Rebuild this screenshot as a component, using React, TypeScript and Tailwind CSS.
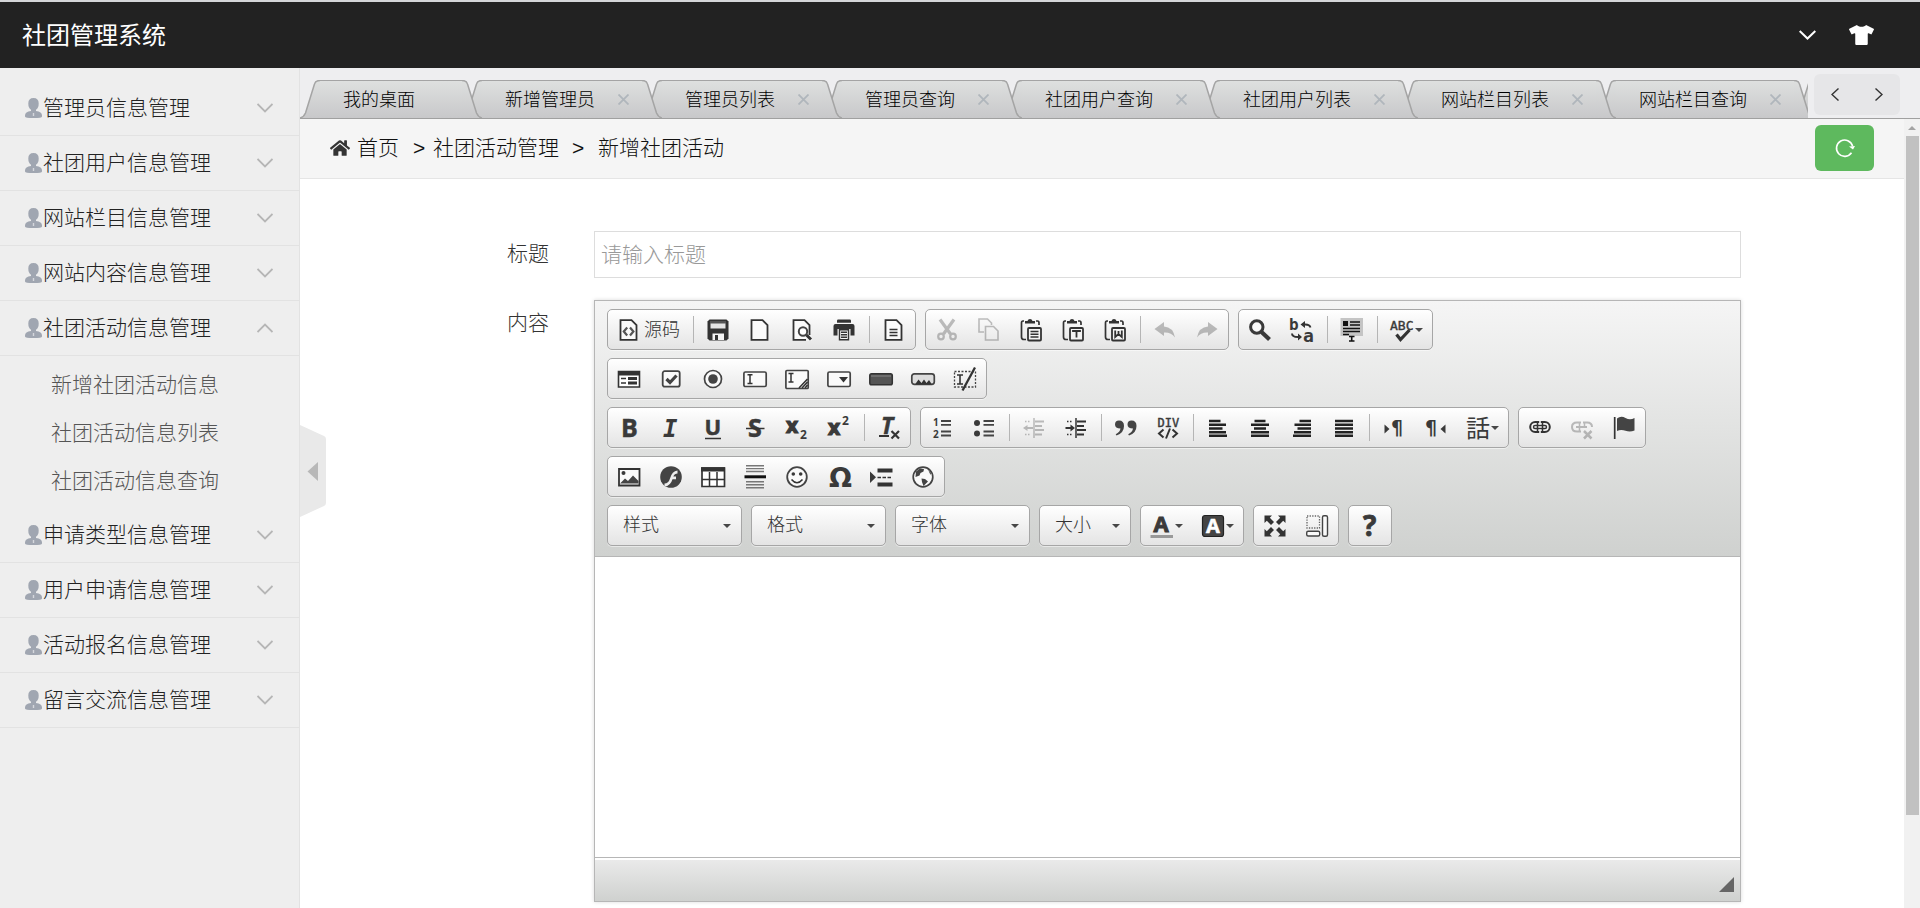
import { ReactNode, useState } from 'react';
import { FaHome, FaTshirt } from 'react-icons/fa';

const menus = [
  { name: '管理员信息管理', children: ['新增管理员', '管理员列表', '管理员查询'] },
  { name: '社团用户信息管理', children: ['社团用户列表', '社团用户查询'] },
  { name: '网站栏目信息管理', children: ['网站栏目列表', '网站栏目查询'] },
  { name: '网站内容信息管理', children: ['网站内容列表', '网站内容查询'] },
  { name: '社团活动信息管理', children: ['新增社团活动信息', '社团活动信息列表', '社团活动信息查询'] },
  { name: '申请类型信息管理', children: ['申请类型列表', '申请类型查询'] },
  { name: '用户申请信息管理', children: ['用户申请列表', '用户申请查询'] },
  { name: '活动报名信息管理', children: ['活动报名列表', '活动报名查询'] },
  { name: '留言交流信息管理', children: ['留言交流列表', '留言交流查询'] },
];

const tabs = [
  '我的桌面',
  '新增管理员',
  '管理员列表',
  '管理员查询',
  '社团用户查询',
  '社团用户列表',
  '网站栏目列表',
  '网站栏目查询',
  '网站内容列表',
];

const doc = <path d="M3.5 2.2h11l5 5v14.6h-16z" fill="#fafafa" stroke="#333" strokeWidth="1.8" />;

const clipboard = (
  <>
    <path d="M5 3H4Q2.500 3 2.500 5v14q0 2.500 2.500 2.500h2M17 3h1.500q1.500 0 1.500 2v2" fill="none" stroke="#333" strokeWidth="1.700" />
    <path d="M6 3h2.500q.5-2 2.500-2t2.500 2H16v2.500H6z" fill="#333" />
    <rect x="9" y="10" width="13" height="12.500" rx="1" fill="#f4f4f4" stroke="#333" strokeWidth="1.800" />
  </>
);

// 24x24 toolbar glyphs
const icons: Record<string, ReactNode> = {
  source: (
    <>
      {doc}
      <path d="M10.200 9.500 6.800 13.500l3.400 4M13 9.500l3.400 4-3.400 4" fill="none" stroke="#555" strokeWidth="2.200" />
    </>
  ),
  save: (
    <>
      <path d="M3.500 1.500h17l2 2v17l-2 2h-17l-2-2v-17z" fill="#333" />
      <path d="M4.500 3h15v7.500h-15z" fill="#e4e4e4" />
      <path d="M4 3h16v2.500H4z" fill="#555" />
      <path d="M6.500 15.500h11.500v6.500H6.500z" fill="#f4f4f4" />
      <path d="M9 17h3v5H9z" fill="#333" />
    </>
  ),
  newpage: doc,
  preview: (
    <>
      {doc}
      <path d="M16 17h6v6h-6z" fill="#f2f2f2" />
      <circle cx="13" cy="13.500" r="4.200" fill="#fff" stroke="#444" strokeWidth="2" />
      <path d="m16.500 17 4.500 4.500" stroke="#333" strokeWidth="3" />
    </>
  ),
  print: (
    <>
      <path d="M5 2.500q0-1 1.200-1h11.600q1.200 0 1.200 1v2.300H5z" fill="#333" />
      <path d="M1.500 8q0-2 2-2h17q2 0 2 2v9.500H18.500V11h-13v6.500h-4z" fill="#333" />
      <path d="M7.500 11.800h9v10h-9z" fill="#f4f4f4" stroke="#333" strokeWidth="1.400" />
      <path d="M9 14.300h6M9 16.800h6M9 19.300h6" stroke="#333" strokeWidth="1.400" />
    </>
  ),
  templates: (
    <>
      {doc}
      <path d="M7.500 11.500h8M7.500 14.500h8M7.500 17.500h8" stroke="#333" strokeWidth="1.600" />
    </>
  ),
  cut: (
    <>
      <path d="M5 1.500 15.500 16M19 1.500 8.500 16" stroke="#333" strokeWidth="3.200" />
      <circle cx="6" cy="18.500" r="2.800" fill="none" stroke="#333" strokeWidth="2.200" />
      <circle cx="18" cy="18.500" r="2.800" fill="none" stroke="#333" strokeWidth="2.200" />
    </>
  ),
  copy: (
    <>
      <path d="M7 14H2V1h8.500l4 4v2" fill="none" stroke="#333" strokeWidth="1.600" />
      <path d="M8.500 8.500h8l4.500 4.500v9H8.500z" fill="none" stroke="#333" strokeWidth="1.600" />
    </>
  ),
  paste: (
    <>
      {clipboard}
      <path d="M11.500 13.500h8M11.500 16.300h8M11.500 19h8" stroke="#333" strokeWidth="1.500" />
    </>
  ),
  pastetext: (
    <>
      {clipboard}
      <path d="M12 14v-1h7v1M15.500 13v6.500" fill="none" stroke="#333" strokeWidth="1.800" />
    </>
  ),
  pasteword: (
    <>
      {clipboard}
      <path d="M12.200 12.500v6.500l3.300-3 3.300 3v-6.500M15.500 13v4" fill="none" stroke="#333" strokeWidth="1.800" />
    </>
  ),
  undo: <path d="M1.500 11 11 4v4.500q9 .5 11 11-4-5.500-11-5V18z" fill="#333" />,
  redo: <path d="M22.500 11 13 4v4.500q-9 .5-11 11 4-5.500 11-5V18z" fill="#333" />,
  find: (
    <>
      <circle cx="8.800" cy="9" r="6.200" fill="#fafafa" stroke="#3a3a3a" strokeWidth="3" />
      <path d="m13.500 14 8 7.500" stroke="#3a3a3a" strokeWidth="4.200" />
    </>
  ),
  replace: (
    <>
      <text x="-1" y="12" fontSize="16" fontWeight="700" fontFamily="DejaVu Sans Mono">b</text>
      <text x="13" y="23.500" fontSize="18" fontWeight="700" fontFamily="DejaVu Sans Mono">a</text>
      <path d="M14 6.500q5.500-.5 6.500 3M2 15.500q0 3.500 6 3.500" fill="none" stroke="#333" strokeWidth="1.900" />
      <path d="m10.500 6.500 4.500-3.500v7zM12 19l-4-3.500v7z" fill="#333" />
    </>
  ),
  selectall: (
    <>
      <path d="M.5 0h22.500v18H.5z" fill="#c4c4c4" />
      <path d="M3 3h5v5H3z" fill="#111" />
      <path d="M10 4h10M10 7h10M3 10.500h17M3 13.500h17M3 16.500h6" stroke="#111" strokeWidth="1.500" />
      <path d="M9 18.500h5.500M9 23h5.500M11.700 18.500V23" stroke="#111" strokeWidth="1.600" />
    </>
  ),
  spell: (
    <>
      <text x="0" y="12" fontSize="13" fontFamily="DejaVu Sans Mono" stroke="#3a3a3a" strokeWidth=".4">ABC</text>
      <path d="m6.500 16.500 4 5 9-9.500" fill="none" stroke="#333" strokeWidth="3.200" />
    </>
  ),
  form: (
    <>
      <path d="M1.500 4.500h21v15.500h-21z" fill="#fff" stroke="#333" strokeWidth="1.600" />
      <path d="M1 4h22v4.500H1z" fill="#333" />
      <path d="M4 11.500h5M4 16h5" stroke="#333" strokeWidth="1.400" />
      <path d="M11 11.500h9M11 16h9" stroke="#333" strokeWidth="3" />
    </>
  ),
  checkbox: (
    <>
      <rect x="3.700" y="4.200" width="17" height="15.500" rx="2" fill="#fafafa" stroke="#444" strokeWidth="1.800" />
      <path d="m7.500 12 3.500 3.500 6.500-7" fill="none" stroke="#444" strokeWidth="3.200" />
    </>
  ),
  radio: (
    <>
      <circle cx="12" cy="12" r="8.500" fill="#fafafa" stroke="#444" strokeWidth="1.700" />
      <circle cx="12" cy="12" r="4.800" fill="#444" />
    </>
  ),
  textfield: (
    <>
      <rect x=".9" y="5" width="22.300" height="14.500" rx="1.500" fill="#fafafa" stroke="#444" strokeWidth="1.700" />
      <path d="M4.500 7.800h5M4.500 16.500h5M7 8v8" stroke="#333" strokeWidth="1.500" />
    </>
  ),
  textarea: (
    <>
      <rect x=".9" y="3.500" width="22.300" height="18" rx="1" fill="#fafafa" stroke="#444" strokeWidth="1.700" />
      <path d="M3.500 6.500h5M3.500 15h5M6 6.500v8.500" stroke="#333" strokeWidth="1.500" />
      <path d="m14 21 8.500-9M17 21l5.500-6M20 21l2.500-3" stroke="#333" strokeWidth="1.600" />
    </>
  ),
  select: (
    <>
      <rect x=".9" y="5" width="22.300" height="14.500" rx="1.500" fill="#fafafa" stroke="#444" strokeWidth="1.700" />
      <path d="M12 10h9l-4.500 5.500z" fill="#333" />
    </>
  ),
  button: (
    <>
      <rect x=".8" y="6.800" width="22.500" height="11" rx="1.800" fill="#555" stroke="#333" strokeWidth="1.500" />
      <path d="M2 9h20" stroke="#777" strokeWidth="1.500" />
    </>
  ),
  imagebutton: (
    <>
      <rect x=".8" y="6.800" width="22.500" height="10.500" rx="2.500" fill="#ddd" stroke="#444" strokeWidth="1.700" />
      <path d="m4 17.500 3.500-5 3 3.500 2.500-3.500 2.500 3.500 2.500-3 3 4.500z" fill="#333" />
    </>
  ),
  hidden: (
    <>
      <rect x="1.500" y="4.500" width="21" height="15.500" fill="none" stroke="#444" strokeWidth="1.300" strokeDasharray="2 1.500" />
      <path d="M4 8h6M4 17h6M7 8v9" stroke="#333" strokeWidth="1.600" />
      <path d="M9.500 23.500 22 .5" stroke="#333" strokeWidth="2.300" />
    </>
  ),
  bold: <text x="4" y="21" fontSize="25" fontWeight="700" stroke="#3a3a3a" strokeWidth=".5">B</text>,
  italic: (
    <text x="4" y="21" fontSize="24" fontWeight="700" fontStyle="italic" fontFamily="DejaVu Sans Mono">I</text>
  ),
  underline: (
    <>
      <text x="3.500" y="18.500" fontSize="22" fontWeight="700" stroke="#3a3a3a" strokeWidth=".5">U</text>
      <path d="M4 22.500h16" stroke="#333" strokeWidth="1.500" />
    </>
  ),
  strike: (
    <>
      <text x="5" y="21" fontSize="25" fontWeight="700" stroke="#3a3a3a" strokeWidth=".5">S</text>
      <path d="M3 12.500h18.500" stroke="#333" strokeWidth="1.500" />
    </>
  ),
  sub: (
    <>
      <text x="1" y="16.500" fontSize="21" fontWeight="700" stroke="#3a3a3a" strokeWidth="1.200">x</text>
      <text x="15" y="22.500" fontSize="12" fontWeight="700">2</text>
    </>
  ),
  sup: (
    <>
      <text x="1" y="18.500" fontSize="21" fontWeight="700" stroke="#3a3a3a" strokeWidth="1.200">x</text>
      <text x="15" y="9" fontSize="12" fontWeight="700">2</text>
    </>
  ),
  clear: (
    <>
      <text x="4" y="17.500" fontSize="23" fontWeight="700" fontStyle="italic" stroke="#3a3a3a" strokeWidth=".5">T</text>
      <path d="M2 20h10M14.500 15l7.500 7.500M22 15l-7.500 7.500" stroke="#333" strokeWidth="2.200" />
    </>
  ),
  ol: (
    <>
      <text x="3" y="10" fontSize="10" fontWeight="700">1</text>
      <text x="3" y="22" fontSize="10" fontWeight="700">2</text>
      <path d="M11 5h10M11 8.800h10M11 15.500h10M11 19.500h10" stroke="#444" strokeWidth="1.800" />
    </>
  ),
  ul: (
    <>
      <circle cx="5" cy="7" r="3" />
      <circle cx="5" cy="17.500" r="3" />
      <path d="M11.500 5h10.500M11.500 8.800h10.500M11.500 15.500h10.500M11.500 19.500h10.500" stroke="#444" strokeWidth="1.800" />
    </>
  ),
  outdent: (
    <>
      <path d="M12 2v20" stroke="#333" strokeWidth="1.500" />
      <path d="M3 5.500h6M3 18.500h6" stroke="#333" strokeWidth="1.500" strokeDasharray="1.500 1.500" />
      <path d="M13 5.500h9M13 10h7M13 14h9M13 18.500h7M4 12h7" stroke="#333" strokeWidth="1.800" />
      <path d="M1 12l4.500-3v6z" fill="#333" />
    </>
  ),
  indent: (
    <>
      <path d="M12 2v20" stroke="#333" strokeWidth="1.500" />
      <path d="M3 5.500h6M3 18.500h6" stroke="#333" strokeWidth="1.500" strokeDasharray="1.500 1.500" />
      <path d="M13 5.500h9M13 10h7M13 14h9M13 18.500h7M1.500 12h6" stroke="#333" strokeWidth="1.800" />
      <path d="M11 12 6.500 8.500v7z" fill="#333" />
    </>
  ),
  quote: (
    <path
      d="M1 8.500Q1 4.500 5 4.500q5 0 5 5.500 0 7-7.500 9.500l-.8-1.300Q6 16 6.500 12.500 1 12.500 1 8.500zM13.500 8.500q0-4 4-4 5 0 5 5.500 0 7-7.500 9.500l-.8-1.300q4.300-2.200 4.800-5.700-5.500 0-5.500-4z"
      fill="#444"
    />
  ),
  div: (
    <>
      <text x="1.500" y="11" fontSize="12" fontFamily="DejaVu Sans Mono" stroke="#3a3a3a" strokeWidth=".4">DIV</text>
      <path d="m7.500 13.500-4.500 4 4.500 4M16.500 13.500l4.500 4-4.500 4M14 12.500l-4 10" fill="none" stroke="#333" strokeWidth="2" />
    </>
  ),
  left: <path d="M3 5h11.500M3 8.800h17M3 12.500h13.500M3 16.200h17M3 19.700h18" stroke="#222" strokeWidth="2.500" />,
  center: <path d="M6.500 5h11M3 8.800h18M6 12.500h12M3 16.200h18M3 19.700h18" stroke="#222" strokeWidth="2.500" />,
  right: <path d="M9.500 5H21M4.500 8.800H21M7.500 12.500H21M4 16.200h17M3 19.700h18" stroke="#222" strokeWidth="2.500" />,
  justify: <path d="M3 5h18M3 8.800h18M3 12.500h18M3 16.200h18M3 19.700h18" stroke="#222" strokeWidth="2.500" />,
  ltr: (
    <>
      <path d="M2.500 8.500v9l5-4.500z" />
      <text x="9" y="18" fontSize="19" fontWeight="700" fontFamily="DejaVu Sans">¶</text>
    </>
  ),
  rtl: (
    <>
      <path d="M21.500 8.500v9l-5-4.500z" />
      <text x="1" y="18" fontSize="19" fontWeight="700" fontFamily="DejaVu Sans">¶</text>
    </>
  ),
  lang: <text x="0" y="20.500" fontSize="24" fontWeight="400" fontFamily="Noto Sans CJK JP">話</text>,
  link: (
    <>
      <rect x="2.200" y="6" width="19.600" height="10" rx="5" fill="none" stroke="#333" strokeWidth="2" />
      <rect x="5.500" y="9.500" width="13" height="3" rx="1.500" fill="#fff" stroke="#333" strokeWidth="1.400" />
      <path d="M12 5v3.500M12 13.500V17" stroke="#f0f0f0" strokeWidth="1.600" />
      <path d="M9.500 6.500v9M14.500 6.500v9" stroke="#333" strokeWidth="1.500" />
    </>
  ),
  unlink: (
    <>
      <path d="M11 15.500H7q-5 0-5-4.500t5-4.500h4M13 6.500h4q5 0 5 4.500" fill="none" stroke="#333" strokeWidth="2" />
      <path d="M9.500 6.500v9M14.500 6.500v5" stroke="#333" strokeWidth="1.500" />
      <path d="M6 11h11" stroke="#333" strokeWidth="2" />
      <path d="m14 15 7.500 7.500M21.500 15 14 22.500" stroke="#333" strokeWidth="2.500" />
    </>
  ),
  anchor: (
    <>
      <path d="M2.700 1v22" stroke="#333" strokeWidth="1.700" />
      <path d="M5 2.500q4-3 8.500-.5t9 0v12.500q-4.500 2-9 .3T5 15z" fill="#444" />
    </>
  ),
  image: (
    <>
      <path d="M2 4h20.500v16.500H2z" fill="#fafafa" stroke="#333" strokeWidth="1.800" />
      <circle cx="6.500" cy="8" r="2" />
      <path d="m3 18.500 5-5 3 2.500 5-5.500 5.500 5.500v2.500z" fill="#444" />
    </>
  ),
  flash: (
    <>
      <circle cx="12" cy="12" r="10.800" fill="#444" />
      <path d="M5.500 18.500q4 0 5.500-5 2-7.500 7.500-8v3q-3 0-4.200 3H17v2.700h-3.500Q11.500 21 5.500 21.500z" fill="#eee" />
    </>
  ),
  table: (
    <>
      <path d="M1 3h22.500v18.500H1z" fill="#fff" stroke="#333" strokeWidth="1.700" />
      <path d="M0 2.200h24v4.300H0z" fill="#333" />
      <path d="M8.500 7v14M16 7v14M1 14.500h22" stroke="#333" strokeWidth="1.500" />
    </>
  ),
  hr: (
    <>
      <path d="M3 .8h18M3 3.600h18M3 6.500h18M3 16.800h18M3 19.700h18M3 22.800h18" stroke="#777" strokeWidth="1.400" />
      <path d="M1.500 11.800h21.500" stroke="#111" strokeWidth="3" />
    </>
  ),
  smiley: (
    <>
      <circle cx="12" cy="12" r="9.800" fill="#fafafa" stroke="#444" strokeWidth="1.800" />
      <circle cx="8.300" cy="9" r="1.800" />
      <circle cx="15.700" cy="9" r="1.800" />
      <path d="M6.500 14.500q5.500 6.500 11 0" fill="none" stroke="#333" strokeWidth="1.600" />
    </>
  ),
  omega: <text x="2" y="22" fontSize="27" fontWeight="700" fontFamily="DejaVu Sans">Ω</text>,
  pagebreak: (
    <>
      <path d="M1 6.500v11.500l6-5.700z" />
      <path d="M8.500 5.500H23.500M8.500 19.500H23.500" stroke="#333" strokeWidth="4.200" />
      <path d="M8.500 12.500h15" stroke="#333" strokeWidth="1.500" strokeDasharray="3.500 1.500" />
    </>
  ),
  iframe: (
    <>
      <circle cx="12" cy="12" r="9.800" fill="#fafafa" stroke="#444" strokeWidth="1.700" />
      <path d="M5 6.500 9 3.500l4 .5-.5 2.500-3 1.500-1 2.500-4 1.500zM10.500 13.500l3.500.5 3 2.500-3 3-1.500 1.500-1.500-4zM17 4.500l3 3.500-.5 2z" fill="#444" />
    </>
  ),
  color: (
    <>
      <text x="3.500" y="18" fontSize="22" fontWeight="700" stroke="#3a3a3a" strokeWidth="1">A</text>
      <path d="M.5 22.500H23" stroke="#999" strokeWidth="3" />
    </>
  ),
  bgcolor: (
    <>
      <rect x="1.500" y="1.500" width="21" height="21" rx="2.500" fill="#444" stroke="#222" strokeWidth="1.200" />
      <text x="5" y="19" fontSize="20" fontWeight="700" stroke="#fff" strokeWidth=".6" style={{ fill: '#fff' }}>A</text>
    </>
  ),
  maximize: (
    <path
      d="M1.500 1.500H9L6.800 3.700 11 8l-3 3-4.200-4.200L1.500 9zM22.500 1.500V9l-2.300-2.200L16 11l-3-3 4.200-4.300L15 1.500zM1.500 22.500V15l2.300 2.200L8 13l3 3-4.200 4.300L9 22.500zM22.500 22.500H15l2.200-2.200L13 16l3-3 4.200 4.200 2.300-2.200z"
      fill="#333"
    />
  ),
  blocks: (
    <>
      <path d="M2 2h12.500v12H2z" fill="none" stroke="#666" strokeWidth="1.300" strokeDasharray="1.300 1.300" />
      <rect x="1.700" y="17.200" width="13" height="4.800" rx="1.500" fill="#fafafa" stroke="#444" strokeWidth="1.400" />
      <rect x="17.500" y="1.800" width="5" height="20.500" rx="1.500" fill="#fafafa" stroke="#444" strokeWidth="1.400" />
    </>
  ),
  about: <text x="5" y="22" fontSize="28" fontWeight="700" stroke="#3a3a3a" strokeWidth=".8">?</text>,
};

// "|" draws a separator inside a group
const toolbarRows = [
  [
    ['source', '|', 'save', 'newpage', 'preview', 'print', '|', 'templates'],
    ['cut', 'copy', 'paste', 'pastetext', 'pasteword', '|', 'undo', 'redo'],
    ['find', 'replace', '|', 'selectall', '|', 'spell'],
  ],
  [['form', 'checkbox', 'radio', 'textfield', 'textarea', 'select', 'button', 'imagebutton', 'hidden']],
  [
    ['bold', 'italic', 'underline', 'strike', 'sub', 'sup', '|', 'clear'],
    ['ol', 'ul', '|', 'outdent', 'indent', '|', 'quote', 'div', '|', 'left', 'center', 'right', 'justify', '|', 'ltr', 'rtl', 'lang'],
    ['link', 'unlink', 'anchor'],
  ],
  [['image', 'flash', 'table', 'hr', 'smiley', 'omega', 'pagebreak', 'iframe']],
];

const disabled = ['cut', 'copy', 'undo', 'redo', 'outdent', 'unlink'];
const withArrow = ['spell', 'lang', 'color', 'bgcolor'];

function Arrow() {
  return (
    <svg className="w-2 h-1" viewBox="0 0 8 4">
      <path d="M0 0h8L4 4z" fill="#474747" />
    </svg>
  );
}

function ToolButton({ name }: { name: string }) {
  return (
    <button
      type="button"
      aria-label={name === 'source' ? undefined : name}
      disabled={disabled.includes(name)}
      className="h-full px-[9px] flex items-center gap-px text-lg text-[#333] disabled:opacity-30"
    >
      <svg
        className="w-6 h-6 shrink-0 overflow-visible fill-[#3a3a3a] font-['Open_Sans',sans-serif]"
        viewBox="0 0 24 24"
      >
        {icons[name]}
      </svg>
      {name === 'source' && <span className="pl-[2px]">源码</span>}
      {withArrow.includes(name) && <Arrow />}
    </button>
  );
}

function ToolGroup({ items }: { items: string[] }) {
  return (
    <div className="h-[41px] flex items-center border border-[#a6a6a6] rounded-[5px] bg-linear-to-b from-white to-[#e4e4e4] shadow-[0_1px_0_#ffffff80]">
      {items.map((item, i) =>
        item === '|' ? (
          <span key={i} className="w-px h-[27px] ml-[4px] mr-[3px] bg-[#b5b5b5]" />
        ) : (
          <ToolButton key={i} name={item} />
        )
      )}
    </div>
  );
}

function Combo({ label, small }: { label: string; small?: boolean }) {
  return (
    <div className="relative">
      <select
        aria-label={label}
        className={`${small ? 'w-[92px]' : 'w-[135px]'} h-[41px] block appearance-none pl-[15px] pb-[2px] text-lg leading-6 text-[#333] border border-[#a6a6a6] rounded-[5px] bg-linear-to-b from-white to-[#e4e4e4] shadow-[0_1px_0_#ffffff80]`}
      >
        <option>{label}</option>
      </select>
      <span className="absolute inset-y-0 right-[11px] flex items-center pointer-events-none">
        <Arrow />
      </span>
    </div>
  );
}

function Editor() {
  return (
    <div className="flex-1 border border-[#b6b6b6] shadow-[0_0_4px_rgba(0,0,0,0.15)]">
      <div className="pl-3 pt-2 pb-[10px] flex flex-col gap-2 border-b border-[#b6b6b6] bg-linear-to-b from-[#f5f5f5] to-[#cfd1cf]">
        {toolbarRows.map((row, i) => (
          <div key={i} className="flex gap-[9px]">
            {row.map((items, j) => (
              <ToolGroup key={j} items={items} />
            ))}
          </div>
        ))}
        <div className="flex gap-[9px]">
          <Combo label="样式" />
          <Combo label="格式" />
          <Combo label="字体" />
          <Combo label="大小" small />
          <ToolGroup items={['color', 'bgcolor']} />
          <ToolGroup items={['maximize', 'blocks']} />
          <ToolGroup items={['about']} />
        </div>
      </div>
      <textarea id="content" className="block w-full h-[300px] p-5 bg-white resize-none outline-none" />
      <div className="h-[44px] pr-[6px] pb-[9px] flex items-end justify-end border-t border-[#b6b6b6] bg-linear-to-b from-[#ebebeb] to-[#cfd1cf] shadow-[inset_0_2px_0_#fff]">
        <svg className="w-[15px] h-[15px]" viewBox="0 0 15 15">
          <path d="M15 0v15H0z" fill="#666" />
        </svg>
      </div>
    </div>
  );
}

function Sidebar() {
  const [opened, setOpened] = useState(4);

  return (
    <aside className="relative w-[300px] shrink-0 pt-[13px] bg-[#eeeeee] border-r border-[#e2e2e2] text-[21px] font-light">
      {menus.map((menu, i) => (
        <div key={menu.name}>
          <button
            type="button"
            onClick={() => setOpened(opened === i ? -1 : i)}
            className="w-full h-[55px] pl-[25px] pr-[26px] flex items-center border-b border-[#e2e2e2] text-[#222]"
          >
            <svg className="w-[17px] h-5 mr-px" viewBox="0 0 17 20">
              <path
                d="M8.500 0q5.200 0 5.200 5.500 0 4.500-2.700 6.300v1.200q6 .5 6 4.500v1q0 1.500-8.500 1.500T0 18.500v-1q0-4 6-4.500v-1.200q-2.700-1.800-2.700-6.300Q3.300 0 8.500 0z"
                fill="#a0a6b1"
              />
              <path d="M7.800 15h1.400v3H7.800z" fill="#d5d8dd" />
            </svg>
            {menu.name}
            <svg className="w-4 h-[10px] ml-auto" viewBox="0 0 16 10" fill="none" stroke="#b5b5b5" strokeWidth="1.800">
              <path d={opened === i ? 'M.5 9 8 1.500 15.500 9' : 'M.5 1 8 8.500 15.500 1'} />
            </svg>
          </button>
          {opened === i && (
            <ul className="pt-[5px] pb-[3px]">
              {menu.children.map(child => (
                <li key={child}>
                  <a href="#" className="block pl-[51px] leading-[48px] text-[#555]">
                    {child}
                  </a>
                </li>
              ))}
            </ul>
          )}
        </div>
      ))}
      <button type="button" aria-label="收起" className="absolute left-[300px] top-[357px] z-20">
        <svg className="w-[26px] h-[92px]" viewBox="0 0 26 92">
          <path d="M0 0 24 11q2 1 2 3v64q0 2-2 3L0 92z" fill="#e9e9e9" />
          <path d="M18 37v19L7.500 46.500z" fill="#b8b8b8" />
        </svg>
      </button>
    </aside>
  );
}

function Tab({ title, order, closable }: { title: string; order: number; closable: boolean }) {
  return (
    <li className="relative flex shrink-0 h-[38px] -mr-5" style={{ zIndex: order }}>
      <svg className="w-5 h-[38px]" viewBox="0 0 20 38">
        <defs>
          <linearGradient id="tab" x1="0" y1="0" x2="0" y2="38" gradientUnits="userSpaceOnUse">
            <stop offset="0" stopColor="#dee0df" />
            <stop offset="1" stopColor="#c8c8ca" />
          </linearGradient>
        </defs>
        <path d="M0 38Q4 37 5.500 33L14.500 4q1-3.500 5.500-3.500V38z" fill="url(#tab)" />
        <path d="M0 38Q4 37 5.500 33L14.500 4q1-3.500 5.500-3.500" fill="none" stroke="#a4a4a4" strokeWidth="1.500" />
      </svg>
      <div className="flex items-center pl-[23px] border-t border-[#a4a4a4] bg-linear-to-b from-[#dee0df] to-[#c8c8ca]">
        <a href="#" className={closable ? '' : 'pr-[47px]'}>{title}</a>
        {closable && (
          <button type="button" aria-label="关闭" className="pl-[23px] pr-[13px]">
            <svg className="w-[11px] h-[11px]" viewBox="0 0 11 11" stroke="#b0b6bc" strokeWidth="1.800">
              <path d="m.5.5 10 10M10.500.5l-10 10" />
            </svg>
          </button>
        )}
      </div>
      <svg className="w-5 h-[38px]" viewBox="0 0 20 38">
        <path d="M20 38Q16 37 14.500 33L5.500 4Q4.500.5 0 .5V38z" fill="url(#tab)" />
        <path d="M20 38Q16 37 14.500 33L5.500 4Q4.500.5 0 .5" fill="none" stroke="#a4a4a4" strokeWidth="1.500" />
      </svg>
    </li>
  );
}

function TabBar() {
  return (
    <div className="h-[51px] flex bg-[#eeeef0] border-b border-[#a0a0a0]">
      <ul className="flex-1 min-w-0 flex items-end overflow-hidden text-lg font-light text-black">
        {tabs.map((tab, i) => (
          <Tab key={tab} title={tab} order={tabs.length - i} closable={i > 0} />
        ))}
      </ul>
      <div className="w-[86px] h-[41px] ml-[6px] mr-5 mt-[6px] px-[17px] flex items-center justify-between rounded-md bg-[#e6e6e8]">
        <button type="button" aria-label="上一个">
          <svg className="w-2 h-[13px]" viewBox="0 0 8 13" fill="none" stroke="#333" strokeWidth="1.400">
            <path d="M7.500.5 1 6.500l6.500 6" />
          </svg>
        </button>
        <button type="button" aria-label="下一个">
          <svg className="w-2 h-[13px]" viewBox="0 0 8 13" fill="none" stroke="#333" strokeWidth="1.400">
            <path d="m.5.5 6.500 6-6.500 6" />
          </svg>
        </button>
      </div>
    </div>
  );
}

function Breadcrumb() {
  return (
    <nav className="h-[60px] px-[30px] pb-[2px] flex items-center bg-[#f5f5f5] border-b border-[#e5e5e5] text-[21px] font-light text-[#111]">
      <FaHome className="w-5 h-5 mr-[7px] text-[#333]" />
      <a href="#">首页</a>
      <span className="w-[34px] pl-[14px] font-normal">&gt;</span>
      <a href="#">社团活动管理</a>
      <span className="w-[39px] pl-[13px] font-normal">&gt;</span>
      <span>新增社团活动</span>
      <button
        type="button"
        aria-label="刷新"
        className="ml-auto w-[59px] h-[46px] flex items-center justify-center rounded-md bg-[#5eb95e]"
      >
        <svg className="w-5 h-5" viewBox="0 0 20 20">
          <path d="M16.500 14.800A8.200 8.200 0 1 1 17.600 8" fill="none" stroke="#fff" strokeWidth="1.600" />
          <path d="m14 8.500 6-.5-2 3.500z" fill="#fff" />
        </svg>
      </button>
    </nav>
  );
}

export default function App() {
  const [title, setTitle] = useState('');

  return (
    <div className="h-screen flex flex-col overflow-hidden bg-white font-['Liberation_Sans','Noto_Sans_CJK_SC',sans-serif]">
      <header className="h-[68px] shrink-0 pl-[22px] pr-[46px] flex items-center border-t-2 border-[#d4d6d8] bg-[#222] text-white">
        <h1 className="pt-[2px] text-2xl">社团管理系统</h1>
        <button type="button" aria-label="菜单" className="ml-auto">
          <svg className="w-[17px] h-[10px]" viewBox="0 0 17 10" fill="none" stroke="#fff" strokeWidth="2">
            <path d="m.7 1 7.800 7.500L16.300 1" />
          </svg>
        </button>
        <button type="button" aria-label="换肤" className="ml-[33px]">
          <FaTshirt className="w-[25px] h-5" />
        </button>
      </header>
      <div className="flex-1 min-h-0 flex">
        <Sidebar />
        <div className="flex-1 min-w-0 flex flex-col">
          <TabBar />
          <div className="flex-1 min-h-0 flex">
            <main className="flex-1 min-w-0 overflow-hidden">
              <Breadcrumb />
              <form className="pt-[52px] pr-[163px] flex flex-col gap-[22px] text-[21px] font-light text-[#333]">
                <div className="flex gap-[45px]">
                  <label htmlFor="title" className="w-[249px] pt-[7px] text-right">
                    标题
                  </label>
                  <input
                    id="title"
                    type="text"
                    value={title}
                    onChange={e => setTitle(e.target.value)}
                    placeholder="请输入标题"
                    className="flex-1 h-[47px] px-[6px] border border-[#ddd] outline-none placeholder:text-[#999]"
                  />
                </div>
                <div className="flex gap-[45px]">
                  <label htmlFor="content" className="w-[249px] pt-[7px] text-right">
                    内容
                  </label>
                  <Editor />
                </div>
              </form>
            </main>
            <div className="w-4 flex flex-col items-center bg-[#f1f1f1]">
              <svg className="w-2 h-1 mt-[7px] mb-[6px]" viewBox="0 0 8 4">
                <path d="M4 0 8 4H0z" fill="#a3a3a3" />
              </svg>
              <div className="w-[13px] h-[86%] bg-[#c1c1c1]" />
            </div>
          </div>
        </div>
      </div>
    </div>
  );
}
